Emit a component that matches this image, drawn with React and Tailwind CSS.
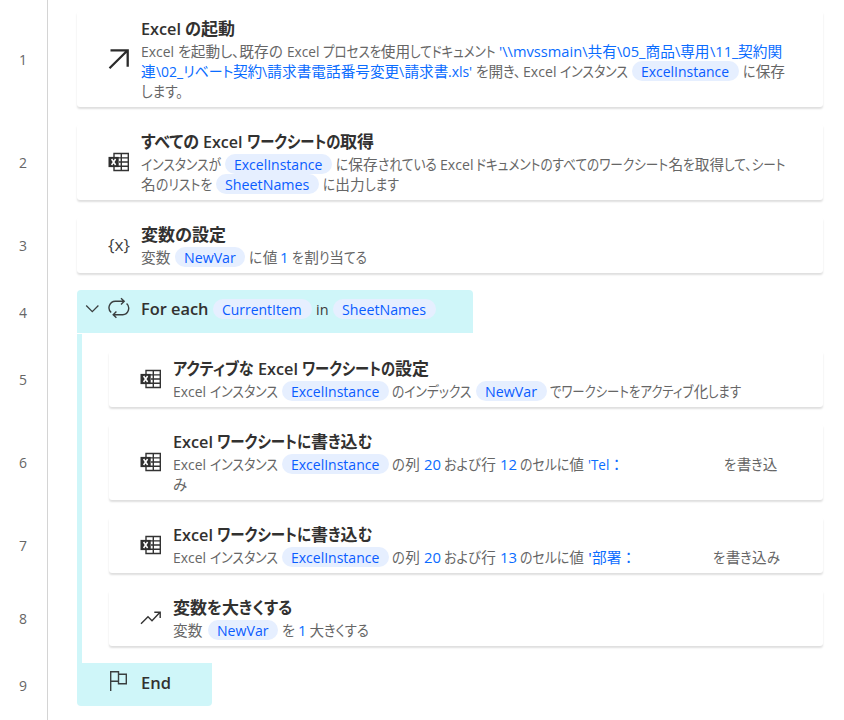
import { useLayoutEffect, useRef, useState } from "react"

const KANJI = /([\u4e00-\u9fff：]+)/

// Kanji keep their full advance, kana and latin are condensed to fill the given width
const Fit = function ({ width, children }) {
    const ref = useRef(null);
    const [fit, setFit] = useState(null);
    const runs = children.split(KANJI).filter(Boolean);

    useLayoutEffect(() => {
        const widths = [...ref.current.children].map((el) => el.getBoundingClientRect().width);
        let fixed = 0;
        let flexible = 0;
        runs.forEach((run, i) => {
            if (KANJI.test(run)) fixed += widths[i];
            else flexible += widths[i];
        });
        setFit({ widths, k: flexible ? (width - fixed) / flexible : 1 });
    }, []);

    return (
        <span ref={ref} className="inline-block whitespace-pre" style={{ width }}>
          {runs.map((run, i) =>
            KANJI.test(run) ? (
              <span key={i} className="inline-block">{run}</span>
            ) : (
              <span
                key={i}
                className="inline-block origin-left [font-feature-settings:'palt']"
                style={fit ? { transform: `scaleX(${fit.k})`, marginRight: fit.widths[i] * (fit.k - 1) } : undefined}
              >
                {run}
              </span>
            )
          )}
        </span>
    )
}

const kinds = {
    text: "",
    value: "text-[#0a6cff]",
    dark: "text-[#3b3b3b]",
    head: "text-[17px] font-semibold text-[#323130]",
    chip: "rounded-full bg-[#e6efff] text-[#0a5cff] pl-[9px] pr-[10px]",
}

// parts: [kind, start, end, text], start and end counted from the text column
const Line = function ({ parts, className = "h-5" }) {
    return (
        <div className={`flex items-center whitespace-nowrap ${className}`}>
          {parts.map(([kind, start, end, text], i) => (
            <span
              key={i}
              className={`shrink-0 h-5 leading-5 ${kinds[kind]}`}
              style={{ marginLeft: start - (i ? parts[i - 1][2] : 0), width: end - start }}
            >
              <Fit width={kind === "chip" ? end - start - 19 : end - start}>{text}</Fit>
            </span>
          ))}
        </div>
    )
}

const ArrowIcon = () => (
    <svg width="22" height="22" viewBox="0 0 22 22" fill="none" stroke="#2b2b2b" strokeWidth="2.3">
      <path d="M2.5 2.3H19.7V18.8M19.2 2.8L1.5 20.2" />
    </svg>
)

const ExcelIcon = () => (
    <svg width="22" height="22" viewBox="0 0 22 22" fill="none">
      <path d="M6 2.5H20.3V19.5H6ZM13.3 2.5V19.5M6 6.9H20.3M11 11H20.3M6 15.2H20.3" stroke="#333" strokeWidth="1.4" />
      <rect x="0.5" y="5.9" width="10.2" height="10.2" fill="#2f2f2f" />
      <path d="M3.6 8L7.6 14M7.6 8L3.6 14" stroke="#fff" strokeWidth="1.5" />
    </svg>
)

const VariableIcon = () => (
    <span className="w-[22px] flex justify-center text-[16px] leading-5 text-[#3f3f3f]">
      <Fit width={22}>{"{x}"}</Fit>
    </span>
)

const LoopIcon = () => (
    <svg width="22" height="22" viewBox="0 0 22 22" fill="none" stroke="#3a3f40" strokeWidth="1.4">
      <path d="M3.2 15.5A6.4 6.4 0 0 1 7.3 4.3H16M13 1.2L16.2 4.3L13 7.4M18.6 6.6A6.4 6.4 0 0 1 14.7 17.7H5.4M8.4 14.6L5.2 17.7L8.4 20.8" />
    </svg>
)

const TrendIcon = () => (
    <svg width="22" height="22" viewBox="0 0 22 22" fill="none" stroke="#333" strokeWidth="1.4">
      <path d="M1 16.8L8 9.8L12 13.8L20 5.3M14.3 5.2H20.2V11" />
    </svg>
)

const FlagIcon = () => (
    <svg width="22" height="22" viewBox="0 0 22 22" fill="none" stroke="#3a3f40" strokeWidth="1.4">
      <path d="M2.7 21V1.7H10.5V11.3H2.7M10.5 4.2H18.3V13.7H10.5V11.3" />
    </svg>
)

const Card = function ({ icon, title, lines, height, className = "" }) {
    return (
        <div className={`flex rounded-[3px] bg-white pl-[30.5px] shadow-[0_2px_2px_rgba(0,0,0,0.13)] ${height} ${className}`}>
          <div className="flex w-[33.5px] items-center">{icon}</div>
          <div className="pt-[6px]">
            <Line parts={title} className="h-6" />
            {lines.map((parts, i) => (
              <Line key={i} parts={parts} />
            ))}
          </div>
        </div>
    )
}

const instance = [
    ["text", 0, 33, "Excel"],
    ["text", 37, 105, "インスタンス"],
    ["chip", 108.7, 216, "ExcelInstance"],
]

const writeTitle = [
    ["head", 0, 40, "Excel"],
    ["head", 44, 199, "ワークシートに書き込む"],
]

const cell = (row) => [
    ...instance,
    ["text", 219.5, 247, "の列"],
    ["value", 251, 268, "20"],
    ["text", 271.5, 323, "および行"],
    ["value", 327, 344, row],
    ["text", 347, 411, "のセルに値"],
]

const topCards = [
    {
        icon: <ArrowIcon />,
        height: "h-24",
        title: [["head", 0, 40, "Excel"], ["head", 44, 94, "の起動"]],
        lines: [
            [
                ["text", 0, 33, "Excel"],
                ["text", 36.5, 141.5, "を起動し、既存の"],
                ["text", 145.5, 178, "Excel"],
                ["text", 181.5, 354.5, "プロセスを使用してドキュメント"],
                ["value", 358, 641, "'\\\\mvssmain\\共有\\05_商品\\専用\\11_契約関"],
            ],
            [
                ["value", 0, 331.5, "連\\02_リベート契約\\請求書電話番号変更\\請求書.xls'"],
                ["text", 335, 380, "を開き、"],
                ["text", 382, 415.5, "Excel"],
                ["text", 418.5, 486.5, "インスタンス"],
                ["chip", 491, 598, "ExcelInstance"],
                ["text", 602, 644, "に保存"],
            ],
            [["text", 0, 42, "します。"]],
        ],
    },
    {
        icon: <ExcelIcon />,
        height: "h-[76px]",
        title: [["head", 0, 58, "すべての"], ["head", 61.5, 101, "Excel"], ["head", 105.5, 233, "ワークシートの取得"]],
        lines: [
            [
                ["text", 0, 80, "インスタンスが"],
                ["chip", 83.7, 191, "ExcelInstance"],
                ["text", 195, 295.5, "に保存されている"],
                ["text", 299, 332.5, "Excel"],
                ["text", 335.5, 644.5, "ドキュメントのすべてのワークシート名を取得して、シート"],
            ],
            [
                ["text", 0, 71, "名のリストを"],
                ["chip", 74.7, 178, "SheetNames"],
                ["text", 182, 257.5, "に出力します"],
            ],
        ],
    },
    {
        icon: <VariableIcon />,
        height: "h-14",
        title: [["head", 0, 85, "変数の設定"]],
        lines: [
            [
                ["text", 0, 30, "変数"],
                ["chip", 33.7, 104.5, "NewVar"],
                ["text", 108.5, 136.5, "に値"],
                ["value", 139.5, 148, "1"],
                ["text", 151.5, 226, "を割り当てる"],
            ],
        ],
    },
]

const loopCards = [
    {
        icon: <ExcelIcon />,
        height: "h-14",
        title: [["head", 0, 80.5, "アクティブな"], ["head", 85, 125, "Excel"], ["head", 129, 256, "ワークシートの設定"]],
        lines: [
            [
                ...instance,
                ["text", 219.5, 299, "のインデックス"],
                ["chip", 303, 374, "NewVar"],
                ["text", 377.5, 568.5, "でワークシートをアクティブ化します"],
            ],
        ],
    },
    {
        icon: <ExcelIcon />,
        height: "h-[76px]",
        title: writeTitle,
        lines: [
            [...cell("12"), ["value", 415, 451, "'Tel："], ["text", 551.5, 604.5, "を書き込"]],
            [["text", 0, 14, "み"]],
        ],
    },
    {
        icon: <ExcelIcon />,
        height: "h-14",
        title: writeTitle,
        lines: [[...cell("13"), ["value", 415, 463, "'部署："], ["text", 540.5, 606.5, "を書き込み"]]],
    },
    {
        icon: <TrendIcon />,
        height: "h-14",
        title: [["head", 0, 119, "変数を大きくする"]],
        lines: [
            [
                ["text", 0, 30, "変数"],
                ["chip", 34.5, 105, "NewVar"],
                ["text", 108.5, 121.5, "を"],
                ["value", 125, 133.5, "1"],
                ["text", 136.5, 196, "大きくする"],
            ],
        ],
    },
]

const gutter = ["h-24", "h-[76px]", "h-14", "h-[43px]", "h-[57px]", "h-[76px]", "h-14", "h-14", "h-[43px]"]

export default function App() {
    return (
        <div className="flex h-[720px] w-[844px] overflow-hidden bg-white font-['Open_Sans','Noto_Sans_CJK_JP',sans-serif] text-[14.67px] text-[#666]">
          {/* Line numbers */}
          <div className="flex w-12 shrink-0 flex-col gap-[17px] border-r border-[#d4d4d4] pt-[11px] pr-0.5">
            {gutter.map((height, i) => (
              <div key={i} className={`flex shrink-0 items-center justify-center ${height}`}>
                <Fit width={8}>{String(i + 1)}</Fit>
              </div>
            ))}
          </div>

          {/* Actions */}
          <div className="ml-[29px] w-[746px] pt-[11px]">
            {topCards.map((card, i) => (
              <Card key={i} {...card} className="mb-[17px]" />
            ))}

            <div className="flex h-[43px] w-[396px] rounded-t bg-[#cff6f9] pl-2">
              <svg className="mt-[11px] mr-[7.5px]" width="15" height="15" viewBox="0 0 15 15" fill="none" stroke="#3a3f40" strokeWidth="1.3">
                <path d="M1.2 4.5L7.3 10.6L13.4 4.5" />
              </svg>
              <div className="mt-[7px] w-[33.5px]">
                <LoopIcon />
              </div>
              <Line
                className="h-5 mt-[9px]"
                parts={[
                    ["head", 0, 67.5, "For each"],
                    ["chip", 72.3, 171, "CurrentItem"],
                    ["dark", 175.5, 188, "in"],
                    ["chip", 192, 295, "SheetNames"],
                ]}
              />
            </div>

            <div className="mt-px flex flex-col gap-[17px] border-l-[5px] border-[#cff6f9] pt-[17px] pb-[17px] pl-[27px]">
              {loopCards.map((card, i) => (
                <Card key={i} {...card} />
              ))}
            </div>

            <div className="flex h-[43px] w-[135px] rounded-b bg-[#cff6f9] pl-[31px]">
              <div className="mt-[7px] w-[33px]">
                <FlagIcon />
              </div>
              <Line className="mt-[10px] h-5" parts={[["head", 0, 30, "End"]]} />
            </div>
          </div>
        </div>
    )
}
